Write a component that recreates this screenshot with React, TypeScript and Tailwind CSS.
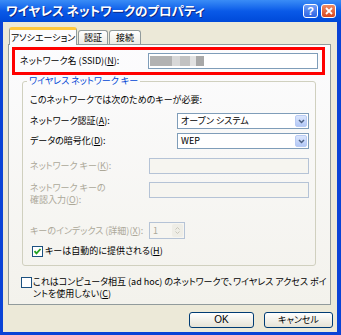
import React from "react";

const Chevron = ({ color = "#4d6185" }: { color?: string }) => (
  <svg width="7" height="5" viewBox="0 0 7 5">
    <path d="M1 1l2.5 2.5L6 1" fill="none" stroke={color} strokeWidth="1.5" />
  </svg>
);

const Select = ({ value }: { value: string }) => (
  <div className="flex-1 h-[16px] border border-[#7f9db9] bg-white flex items-center pl-[3px] pr-[1px]">
    <span className="flex-1 leading-[12px]">{value}</span>
    <div className="w-[12px] h-[12px] rounded-[2px] border border-[#b9cbf3] bg-linear-to-b from-[#dbe6fd] to-[#b3c8f6] flex items-center justify-center">
      <Chevron />
    </div>
  </div>
);

const Disabled = ({ className = "flex-1" }: { className?: string }) => (
  <div className={`${className} h-[16px] border border-[#b5c3d6] bg-[#f6f5f0]`} />
);

const Check = () => (
  <svg width="9" height="9" viewBox="0 0 9 9">
    <path d="M1.5 4.2l2 2.2L7.5 2" fill="none" stroke="#21a121" strokeWidth="1.8" />
  </svg>
);

export default function App() {
  return (
    <div className="w-[341px] h-[335px] flex flex-col bg-[#0a43d6] font-['Noto_Sans_CJK_JP',sans-serif] [font-feature-settings:'palt'] text-[9px] whitespace-nowrap text-black overflow-hidden">
      {/* title bar */}
      <div className="h-[22px] shrink-0 flex items-center pl-[6px] pr-[5px] bg-linear-to-b from-[#3a8cf6] via-[#0a5ae8] to-[#0049d9]">
        <span className="flex-1 text-white font-bold text-[12.5px] leading-[14px] [text-shadow:1px_1px_0_#0b2a8a]">
          ワイヤレス ネットワークのプロパティ
        </span>
        <div className="w-[15px] h-[14px] rounded-[3px] border border-white bg-linear-to-b from-[#6f9cf6] to-[#2d63e3] text-white font-bold text-[11px] leading-[12px] flex items-center justify-center font-['Liberation_Sans',sans-serif]">
          ?
        </div>
        <div className="w-[15px] h-[14px] ml-[3px] rounded-[3px] border border-white bg-linear-to-b from-[#ee8a62] to-[#d8461e] flex items-center justify-center">
          <svg width="8" height="8" viewBox="0 0 8 8">
            <path d="M1 1l6 6M7 1L1 7" stroke="white" strokeWidth="1.8" />
          </svg>
        </div>
      </div>

      {/* body */}
      <div className="flex-1 ml-[3px] mr-[4px] mb-[3px] bg-[#ece9d8] flex flex-col">
        {/* tabs */}
        <div className="relative z-10 flex items-end pl-[6px] pt-[5px] -mb-[1px]">
          <div className="w-[68px] h-[18px] border-x border-[#919b9c] border-t-[3px] border-t-[#ffc83c] rounded-t-[3px] bg-[#fcfcfe] flex items-center justify-center leading-[12px]">
            アソシエーション
          </div>
          <div className="w-[30px] h-[14px] ml-[1px] mb-[1px] border-x border-t border-[#919b9c] rounded-t-[3px] bg-linear-to-b from-white to-[#ecebe5] flex items-center justify-center leading-[12px]">
            認証
          </div>
          <div className="w-[32px] h-[14px] ml-[1px] mb-[1px] border-x border-t border-[#919b9c] rounded-t-[3px] bg-linear-to-b from-white to-[#ecebe5] flex items-center justify-center leading-[12px]">
            接続
          </div>
        </div>

        {/* panel */}
        <div className="ml-[5px] mr-[6px] h-[261px] border border-[#919b9c] bg-linear-to-b from-[#fcfcfe] to-[#f3f2ec] flex flex-col">
          <div className="mt-[2px] ml-[3px] mr-[5px] h-[28px] border-[3px] border-[#ff0000] flex items-center pl-[5px] pr-[4px]">
            <span className="w-[128px] leading-[12px]">
              ネットワーク名 (SSID)(<u>N</u>):
            </span>
            <div className="flex-1 h-[16px] border border-[#7f9db9] bg-white flex items-center pl-[1px]">
              <div className="flex h-[10px] blur-[0.6px]">
                <div className="w-[22px] bg-[#b2b2b2]" />
                <div className="w-[8px] bg-[#d8d8d8]" />
                <div className="w-[10px] bg-[#c2c2c2]" />
                <div className="w-[6px] bg-[#e2e2e2]" />
                <div className="w-[8px] bg-[#a8a8a8]" />
              </div>
            </div>
          </div>

          <fieldset className="ml-[13px] mr-[14px] border border-[#d0d0bf] rounded-[3px] pl-[7px] pr-[6px] pb-[8px] flex flex-col">
            <legend className="-ml-[3px] px-[2px] text-[#0046d5] leading-[12px]">
              ワイヤレス ネットワーク キー
            </legend>
            <div className="mt-[7px] leading-[12px]">このネットワークでは次のためのキーが必要:</div>
            <div className="mt-[7px] flex items-center">
              <span className="w-[147px] leading-[12px]">
                ネットワーク認証(<u>A</u>):
              </span>
              <Select value="オープン システム" />
            </div>
            <div className="mt-[4px] flex items-center">
              <span className="w-[147px] leading-[12px]">
                データの暗号化(<u>D</u>):
              </span>
              <Select value="WEP" />
            </div>
            <div className="mt-[9px] flex items-center text-[#aca899]">
              <span className="w-[119px] leading-[12px]">
                ネットワーク キー(<u>K</u>):
              </span>
              <Disabled />
            </div>
            <div className="mt-[8px] flex items-start text-[#aca899]">
              <div className="w-[119px] flex flex-col">
                <span className="leading-[12px]">ネットワーク キーの</span>
                <span className="leading-[12px]">
                  確認入力(<u>O</u>):
                </span>
              </div>
              <Disabled />
            </div>
            <div className="mt-[16px] flex items-center text-[#aca899]">
              <span className="w-[119px] leading-[12px]">
                キーのインデックス (詳細)(<u>X</u>):
              </span>
              <div className="w-[36px] h-[17px] border border-[#b5c3d6] bg-[#f6f5f0] flex items-center pl-[3px] pr-[1px]">
                <span className="flex-1 leading-[12px]">1</span>
                <div className="w-[11px] h-[13px] flex flex-col items-center justify-center gap-[1px] rounded-[2px] bg-[#eeede6]">
                  <svg width="5" height="3" viewBox="0 0 5 3">
                    <path d="M0.5 2.5l2-2 2 2" fill="none" stroke="#c9c7ba" />
                  </svg>
                  <svg width="5" height="3" viewBox="0 0 5 3">
                    <path d="M0.5 0.5l2 2 2-2" fill="none" stroke="#c9c7ba" />
                  </svg>
                </div>
              </div>
            </div>
            <div className="mt-[6px] flex items-center">
              <div className="ml-[2px] w-[11px] h-[11px] border border-[#1c5180] bg-white flex items-center justify-center">
                <Check />
              </div>
              <span className="ml-[2px] leading-[12px]">
                キーは自動的に提供される(<u>H</u>)
              </span>
            </div>
          </fieldset>

          <div className="mt-[10px] ml-[12px] flex items-start">
            <div className="mt-[1px] w-[11px] h-[11px] border border-[#1c5180] bg-white shrink-0" />
            <div className="ml-[1px] flex flex-col">
              <span className="leading-[12px]">
                これはコンピュータ相互 (ad hoc) のネットワークで、ワイヤレス アクセス ポイ
              </span>
              <span className="leading-[12px]">
                ントを使用しない(<u>C</u>)
              </span>
            </div>
          </div>
        </div>

        {/* buttons */}
        <div className="mt-[7px] flex justify-end pr-[4px]">
          <button className="w-[65px] h-[16px] rounded-[3px] border border-[#003c74] bg-linear-to-b from-white to-[#e6e3d6] leading-[12px] font-['Liberation_Sans',sans-serif] text-[10px]">
            OK
          </button>
          <button className="ml-[10px] w-[69px] h-[16px] rounded-[3px] border border-[#003c74] bg-linear-to-b from-white to-[#e6e3d6] leading-[12px]">
            キャンセル
          </button>
        </div>
      </div>
    </div>
  );
}
